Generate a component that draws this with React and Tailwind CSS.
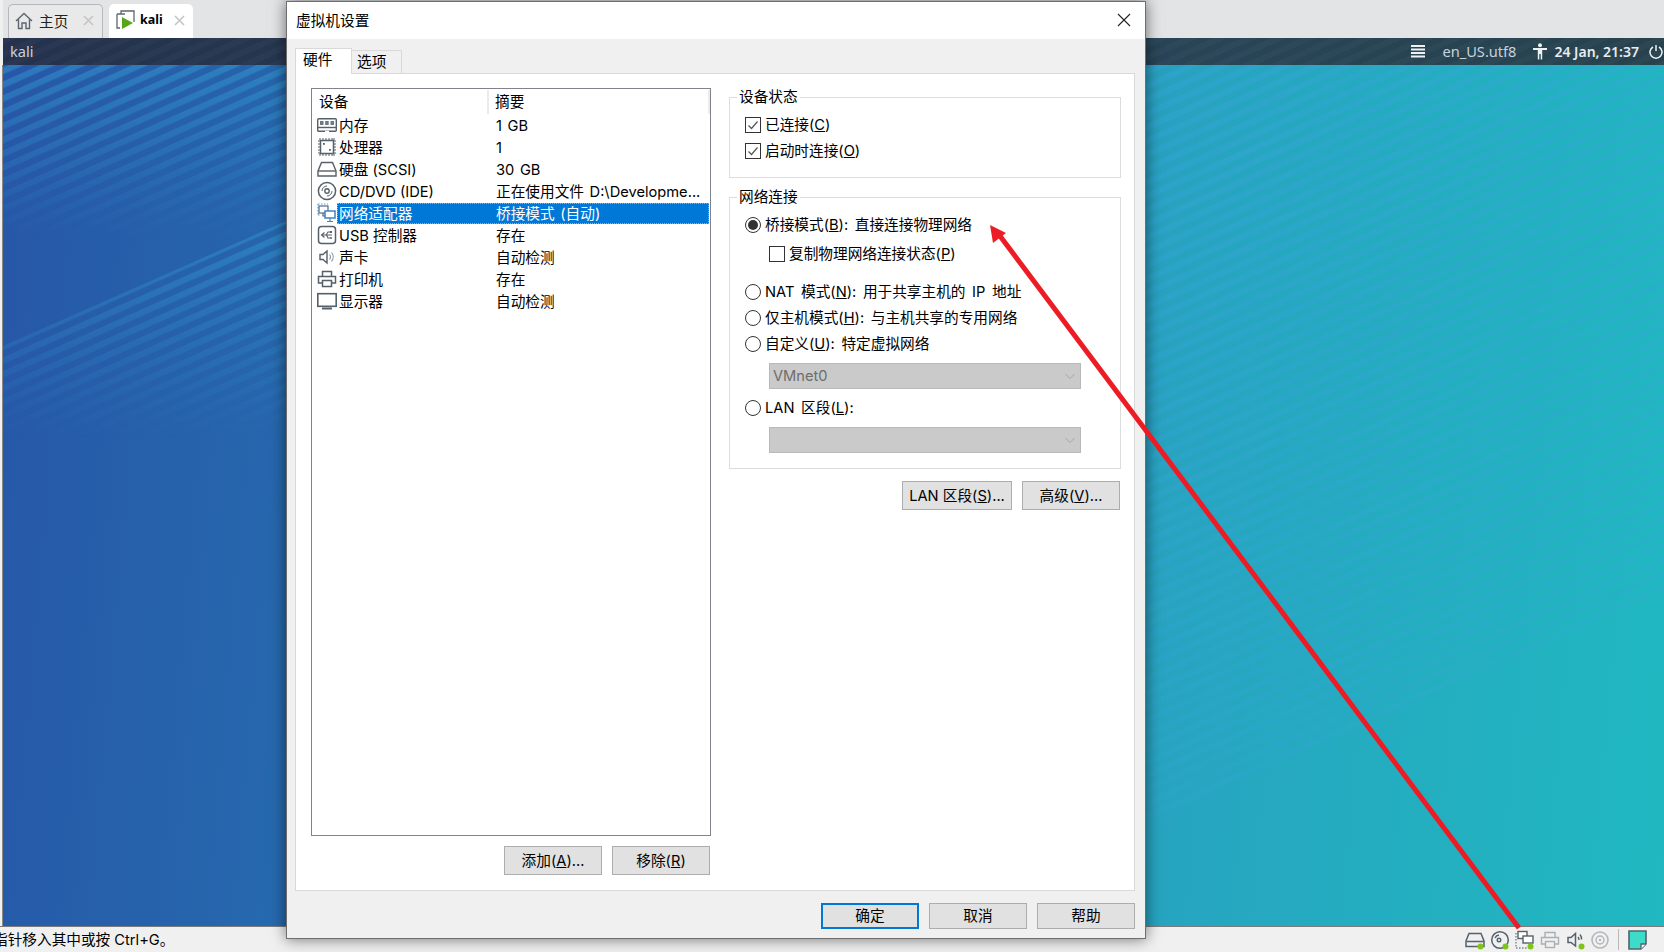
import React from "react";

const UI = "font-['Noto_Sans','Noto_Sans_CJK_SC',sans-serif]";
const DLG = "font-['Inter','Noto_Sans_CJK_SC',sans-serif]";

function Svg({ w = 20, h = 20, vb, children, className = "" }) {
  return (
    <svg width={w} height={h} viewBox={vb || `0 0 ${w} ${h}`} fill="none" stroke="#55606a" strokeWidth="1.4" className={"shrink-0 " + className}>
      {children}
    </svg>
  );
}

const MemIcon = () => (
  <Svg>
    <rect x="0.7" y="3.7" width="18.6" height="12.6" rx="1" strokeWidth="1.4" />
    <path d="M1 12.5H19" />
    <rect x="3" y="6" width="3.5" height="4" fill="#6f7a84" stroke="none" />
    <rect x="8.2" y="6" width="3.5" height="4" fill="#6f7a84" stroke="none" />
    <rect x="13.5" y="6" width="3.5" height="4" fill="#6f7a84" stroke="none" />
    <path d="M8 16.5h4" stroke="#fff" />
  </Svg>
);
const CpuIcon = () => (
  <Svg>
    <rect x="3.5" y="3.5" width="13" height="13" strokeWidth="1.5" />
    <path d="M3 1v2M6 1v2M9 1v2M12 1v2M15 1v2M17 1v2M3 17v2M6 17v2M9 17v2M12 17v2M15 17v2M17 17v2M1 4h2M1 7h2M1 10h2M1 13h2M1 16h2M17 4h2M17 7h2M17 10h2M17 13h2M17 16h2" strokeWidth="1" />
    <rect x="6" y="6" width="1.8" height="1.8" fill="#55606a" stroke="none" />
    <rect x="12" y="12" width="1.8" height="1.8" fill="#55606a" stroke="none" />
  </Svg>
);
const HddIcon = () => (
  <Svg>
    <path d="M4.5 3.5H15.5L19 12V17H1V12Z" strokeWidth="1.4" />
    <path d="M1.2 12H18.8" strokeWidth="1.4" />
  </Svg>
);
const CdIcon = () => (
  <Svg>
    <circle cx="10" cy="10" r="8.6" strokeWidth="1.5" />
    <circle cx="10" cy="10" r="2.2" />
    <path d="M5 10a5 5 0 0 1 5-5M10 15a5 5 0 0 0 5-5" strokeWidth="1" />
  </Svg>
);
const NetIcon = () => (
  <Svg>
    <path d="M1 1h10M1 1v11M1 12h3" stroke="#5b9bd5" strokeWidth="1.2" strokeDasharray="1.5 1.5" />
    <rect x="2" y="3" width="9" height="7" fill="#fff" stroke="#4f6a80" strokeWidth="1.2" />
    <rect x="8" y="8" width="10" height="7" fill="#fff" stroke="#3f83c4" strokeWidth="1.5" />
    <path d="M13 15v3M10 18.5h6" stroke="#3f83c4" strokeWidth="1.2" />
    <path d="M6 10v3H8" stroke="#4f6a80" strokeWidth="1.2" />
  </Svg>
);
const UsbIcon = () => (
  <Svg>
    <rect x="1.5" y="1.5" width="17" height="17" rx="3" strokeWidth="1.5" />
    <path d="M4.5 10H15M7.5 7.5 4.5 10l3 2.5M9 10l2-3h2M9.5 10l1.5 3h2" strokeWidth="1.1" />
    <rect x="13" y="6" width="2" height="2" fill="#55606a" stroke="none" />
    <circle cx="14" cy="13" r="1" fill="#55606a" stroke="none" />
  </Svg>
);
const SoundIcon = () => (
  <Svg>
    <path d="M3 7.5H6L10 4V16L6 12.5H3Z" strokeWidth="1.4" />
    <path d="M12.5 7.5a4 4 0 0 1 0 5M14.5 5.5a7 7 0 0 1 0 9" strokeWidth="1.1" stroke="#8a949c" />
  </Svg>
);
const PrintIcon = () => (
  <Svg>
    <path d="M5.5 7V2.5H14.5V7" strokeWidth="1.5" />
    <path d="M5 14H1.5V7.5H18.5V14H15" strokeWidth="1.5" />
    <rect x="5.5" y="11.5" width="9" height="6" strokeWidth="1.5" />
  </Svg>
);
const MonitorIcon = () => (
  <Svg>
    <rect x="0.8" y="2.7" width="18.4" height="12.6" strokeWidth="1.6" />
    <path d="M5 17.5H15" strokeWidth="2" />
  </Svg>
);

const rows = [
  [MemIcon, "内存", "1 GB"],
  [CpuIcon, "处理器", "1"],
  [HddIcon, "硬盘 (SCSI)", "30 GB"],
  [CdIcon, "CD/DVD (IDE)", "正在使用文件 D:\\Developme..."],
  [NetIcon, "网络适配器", "桥接模式 (自动)", true],
  [UsbIcon, "USB 控制器", "存在"],
  [SoundIcon, "声卡", "自动检测"],
  [PrintIcon, "打印机", "存在"],
  [MonitorIcon, "显示器", "自动检测"],
];

function Row({ icon: Icon, a, b, sel }) {
  return (
    <div className="flex h-[22px] items-center pl-[5px] pr-[1px]">
      <Icon />
      <div className={"flex h-[21px] flex-1 items-center pl-[2px] pt-px " + (sel ? "bg-[#0078d7] text-white outline-1 -outline-offset-1 outline-dotted outline-[#e0a060]" : "")}>
        <span className="w-[157px] shrink-0 whitespace-nowrap">{a}</span>
        <span className="whitespace-nowrap [word-spacing:1.5px]">{b}</span>
      </div>
    </div>
  );
}

function Btn({ children, w = "w-[98px] h-[26px]", primary }) {
  return (
    <div className={"flex items-center justify-center bg-[#e1e1e1] text-black " + w + " " + (primary ? "border-2 border-[#0078d7]" : "border border-[#adadad]")}>
      {children}
    </div>
  );
}

function Check({ on }) {
  return (
    <div className="flex h-[16px] w-[16px] shrink-0 items-center justify-center border border-[#333] bg-white">
      {on && (
        <svg width="12" height="12" viewBox="0 0 12 12" fill="none" stroke="#555" strokeWidth="1.2">
          <path d="M1.5 6.5 4.5 9.5 10.5 2.5" />
        </svg>
      )}
    </div>
  );
}

function Radio({ on }) {
  return (
    <div className="flex h-[16px] w-[16px] shrink-0 items-center justify-center rounded-full border border-[#333] bg-white">
      {on && <div className="h-[10px] w-[10px] rounded-full bg-[#333]" />}
    </div>
  );
}

function Opt({ control, className = "", children }) {
  return (
    <div className={"flex h-[22px] items-center gap-[4px] whitespace-pre [word-spacing:2.5px] " + className}>
      {control}
      <span>{children}</span>
    </div>
  );
}

function Group({ title, className, children }) {
  return (
    <div className={"relative border border-[#dcdcdc] pl-[15px] " + className}>
      <div className="absolute -top-[12px] left-[7px] bg-white px-[2px] leading-[22px]">{title}</div>
      {children}
    </div>
  );
}

function Combo({ text, className = "" }) {
  return (
    <div className={"ml-[24px] flex h-[26px] w-[312px] items-center justify-between border border-[#b9b9b9] bg-[#cacaca] pl-[3px] pr-[4px] text-[#6d6d6d] " + className}>
      <span>{text}</span>
      <svg width="12" height="12" viewBox="0 0 12 12" fill="none" stroke="#a8a8a8" strokeWidth="1">
        <path d="M1.5 4 6 8.5 10.5 4" />
      </svg>
    </div>
  );
}

function Dialog() {
  return (
    <div className={"absolute left-[286px] top-[1px] z-10 flex h-[938px] w-[860px] flex-col border border-[#6e6e6e] bg-[#f0f0f0] text-[14.67px] text-black shadow-[0_0_14px_rgba(0,0,0,0.55)] " + DLG}>
      <div className="flex h-[37px] shrink-0 items-center justify-between bg-white pl-[9px] pr-[14px]">
        <span>虚拟机设置</span>
        <svg className="-translate-y-px" width="14" height="14" viewBox="0 0 14 14" stroke="#222" strokeWidth="1.1">
          <path d="M1 1 13 13M13 1 1 13" />
        </svg>
      </div>
      <div className="flex flex-1 flex-col pl-[8px] pr-[10px]">
        <div className="flex h-[34px] shrink-0 items-end">
          <div className="relative top-px flex h-[26px] w-[57px] items-center border border-b-0 border-[#d9d9d9] bg-white pb-[3px] pl-[7px]">硬件</div>
          <div className="flex h-[23px] w-[50px] items-center border border-b-0 border-l-0 border-[#d9d9d9] bg-[#f0f0f0] pl-[5px]">选项</div>
        </div>
        <div className="flex h-[818px] shrink-0 border border-[#d9d9d9] bg-white">
          <div className="ml-[15px] mt-[14px] flex w-[400px] flex-col">
            <div className="h-[748px] border border-[#82828f] bg-white">
              <div className="flex h-[25px] items-center pt-px">
                <div className="flex h-full w-[177px] items-center border-r-2 border-[#ececec] pl-[7px]">设备</div>
                <div className="flex h-full flex-1 items-center border-r-2 border-[#ececec] pl-[6px]">摘要</div>
              </div>
              {rows.map(([I, a, b, s]) => (
                <Row key={a} icon={I} a={a} b={b} sel={s} />
              ))}
            </div>
            <div className="mt-[10px] flex justify-end gap-[10px] pr-px">
              <Btn w="w-[98px] h-[29px]">
                添加(<u>A</u>)...
              </Btn>
              <Btn w="w-[98px] h-[29px]">
                移除(<u>R</u>)
              </Btn>
            </div>
          </div>
          <div className="ml-[18px] flex w-[392px] flex-col pt-[23px]">
            <Group title="设备状态" className="h-[81px]">
              <Opt control={<Check on />} className="mt-[16px]">
                已连接(<u>C</u>)
              </Opt>
              <Opt control={<Check on />} className="mt-[4px]">
                启动时连接(<u>O</u>)
              </Opt>
            </Group>
            <Group title="网络连接" className="mt-[19px] h-[272px]">
              <Opt control={<Radio on />} className="mt-[16px]">
                桥接模式(<u>B</u>): 直接连接物理网络
              </Opt>
              <Opt control={<Check />} className="ml-[24px] mt-[7px]">
                复制物理网络连接状态(<u>P</u>)
              </Opt>
              <Opt control={<Radio />} className="mt-[16px]">
                NAT 模式(<u>N</u>): 用于共享主机的 IP 地址
              </Opt>
              <Opt control={<Radio />} className="mt-[4px]">
                仅主机模式(<u>H</u>): 与主机共享的专用网络
              </Opt>
              <Opt control={<Radio />} className="mt-[4px]">
                自定义(<u>U</u>): 特定虚拟网络
              </Opt>
              <Combo text="VMnet0" className="mt-[8px]" />
              <Opt control={<Radio />} className="mt-[8px]">
                LAN 区段(<u>L</u>):
              </Opt>
              <Combo text="" className="mt-[8px]" />
            </Group>
            <div className="mt-[12px] mr-px flex justify-end gap-[10px]">
              <Btn w="w-[110px] h-[29px]">
                LAN 区段(<u>S</u>)...
              </Btn>
              <Btn w="w-[98px] h-[29px]">
                高级(<u>V</u>)...
              </Btn>
            </div>
          </div>
        </div>
        <div className="flex justify-end gap-[10px] pt-[12px]">
          <Btn primary>确定</Btn>
          <Btn>取消</Btn>
          <Btn>帮助</Btn>
        </div>
      </div>
    </div>
  );
}

function Wallpaper() {
  return (
    <svg className="absolute inset-0 h-full w-full" viewBox="3 65 1661 861" preserveAspectRatio="none">
      <defs>
        <pattern id="st" patternUnits="userSpaceOnUse" width="60" height="12.6" patternTransform="rotate(-24)">
          <rect width="60" height="6.3" fill="#37a6d8" />
        </pattern>
        <linearGradient id="fa" x1="0" y1="65" x2="0" y2="240" gradientUnits="userSpaceOnUse">
          <stop offset="0" stopColor="#fff" stopOpacity="0.42" />
          <stop offset="1" stopColor="#fff" stopOpacity="0" />
        </linearGradient>
        <linearGradient id="fb" x1="0" y1="220" x2="0" y2="440" gradientUnits="userSpaceOnUse">
          <stop offset="0" stopColor="#fff" stopOpacity="0.4" />
          <stop offset="1" stopColor="#fff" stopOpacity="0" />
        </linearGradient>
        <linearGradient id="fc" x1="1150" y1="65" x2="1500" y2="860" gradientUnits="userSpaceOnUse">
          <stop offset="0" stopColor="#fff" stopOpacity="0.4" />
          <stop offset="0.85" stopColor="#fff" stopOpacity="0.18" />
          <stop offset="1" stopColor="#fff" stopOpacity="0" />
        </linearGradient>
        <mask id="ma" maskUnits="userSpaceOnUse" x="0" y="0" width="1664" height="952">
          <rect x="3" y="65" width="290" height="180" fill="url(#fa)" />
        </mask>
        <mask id="mb" maskUnits="userSpaceOnUse" x="0" y="0" width="1664" height="952">
          <polygon points="3,346 300,215 300,440 3,440" fill="url(#fb)" />
        </mask>
        <mask id="mc" maskUnits="userSpaceOnUse" x="0" y="0" width="1664" height="952">
          <polygon points="1146,65 1664,65 1664,590 1146,830" fill="url(#fc)" />
        </mask>
      </defs>
      <rect x="3" y="65" width="1661" height="861" fill="url(#st)" mask="url(#ma)" />
      <rect x="3" y="65" width="1661" height="861" fill="url(#st)" mask="url(#mb)" />
      <rect x="3" y="65" width="1661" height="861" fill="url(#st)" mask="url(#mc)" />
    </svg>
  );
}

function Dot() {
  return <circle cx="15.5" cy="16.5" r="3" fill="#7dc41c" stroke="none" />;
}

function StatusIcons() {
  return (
    <div className="flex items-center">
      <Svg w={20} h={20}>
        <path d="M4 3.5H16L19 11V16.5H1V11Z" stroke="#55616c" strokeWidth="1.5" />
        <path d="M1.5 11.5H18.5" stroke="#55616c" strokeWidth="1.5" />
        <Dot />
      </Svg>
      <Svg w={20} h={20} className="ml-[5px]">
        <circle cx="10" cy="10" r="8.3" stroke="#55616c" strokeWidth="1.5" />
        <circle cx="9" cy="10" r="1.8" stroke="#55616c" />
        <path d="M5 8a5 5 0 0 1 4-3" stroke="#55616c" />
        <Dot />
      </Svg>
      <Svg w={20} h={20} className="ml-[5px]">
        <path d="M1 3v15h12" stroke="#7b858e" strokeDasharray="1.5 1.5" />
        <rect x="3" y="1.5" width="9" height="7" fill="#fff" stroke="#55616c" strokeWidth="1.4" />
        <rect x="8" y="6" width="10" height="7" fill="#fff" stroke="#55616c" strokeWidth="1.4" />
        <Dot />
      </Svg>
      <Svg w={20} h={20} className="ml-[5px] opacity-45">
        <path d="M5 7V2.5H15V7M5 14H1.5V7.5H18.5V14H15" stroke="#55616c" strokeWidth="1.4" />
        <rect x="5.5" y="11.5" width="9" height="6" stroke="#55616c" strokeWidth="1.4" />
      </Svg>
      <Svg w={20} h={20} className="ml-[6px]">
        <path d="M2 7.5H5L9.5 3.5V16L5 12.5H2Z" stroke="#55616c" strokeWidth="1.5" />
        <path d="M12 7a4 4 0 0 1 1 3M14 4.5a7 7 0 0 1 1.5 5" stroke="#55616c" />
        <Dot />
      </Svg>
      <Svg w={20} h={20} className="ml-[4px] opacity-40">
        <circle cx="10" cy="10" r="8" stroke="#55616c" strokeWidth="1.5" />
        <circle cx="10" cy="10" r="4" stroke="#55616c" />
        <circle cx="10" cy="10" r="1.2" fill="#55616c" stroke="none" />
      </Svg>
      <div className="ml-[8px] h-[21px] w-px bg-[#b9b9b9]" />
      <Svg w={20} h={20} className="ml-[9px]">
        <path d="M1 1H18V14L13 19H1Z" fill="#3ddcc8" stroke="#55616c" strokeWidth="1.6" />
        <path d="M13 19V14H18" fill="#fff" stroke="#55616c" strokeWidth="1.3" />
      </Svg>
    </div>
  );
}

export default function App() {
  return (
    <div className={"relative flex h-[952px] w-[1664px] flex-col overflow-hidden bg-[#f0f0f0] " + UI}>
      {/* VMware tab strip */}
      <div className="flex h-[38px] shrink-0 items-end border-l-[3px] border-[#f0f0f0] bg-[#e3e4e6] pl-[5px]">
        <div className="flex h-[34px] w-[95px] items-center rounded-t-[5px] border border-b-0 border-[#b5b7ba] bg-[#e9e9ea] pb-[2px] pl-[6px] text-[14.67px] text-[#222]">
          <svg width="18" height="18" viewBox="0 0 18 18" fill="none" stroke="#5b6670" strokeWidth="1.4">
            <path d="M1 9 9 1.5 17 9M3.5 7.5V16.5H7V11H11V16.5H14.5V7.5" />
          </svg>
          <span className="ml-[6px]">主页</span>
          <svg className="ml-[15px]" width="11" height="11" viewBox="0 0 11 11" stroke="#c3c5c8" strokeWidth="1.6">
            <path d="M1 1 10 10M10 1 1 10" />
          </svg>
        </div>
        <div className="ml-[6px] flex h-[34px] w-[84px] items-center rounded-t-[5px] bg-white pb-[2px] pl-[7px] text-[12.5px] font-bold text-black">
          <svg width="19" height="20" viewBox="0 0 19 20" fill="none" stroke="#5b6670" strokeWidth="1.3">
            <path d="M5 4V1H18V12M1 4H9M1 4V18H4" />
            <path d="M6 7V19L17 13Z" fill="#58a618" stroke="none" />
          </svg>
          <span className="ml-[5px]">kali</span>
          <svg className="ml-[11px]" width="11" height="11" viewBox="0 0 11 11" stroke="#c3c5c8" strokeWidth="1.6">
            <path d="M1 1 10 10M10 1 1 10" />
          </svg>
        </div>
      </div>

      {/* Guest panel */}
      <div className="flex h-[27px] shrink-0 items-center border-l-[3px] border-[#f0f0f0] bg-[repeating-linear-gradient(156deg,rgba(255,255,255,0.025)_0_6px,transparent_6px_12px),linear-gradient(90deg,#25324d,#284556_75%,#27424e)] pl-[7px] text-[14.6px] text-[#c8d2dc]">
        <span>kali</span>
        <div className="ml-auto flex items-center pr-[1px]">
          <svg width="14" height="14" viewBox="0 0 14 14" stroke="#eef2f4" strokeWidth="2">
            <path d="M0 2H14M0 5.5H14M0 9H14M0 12.5H14" />
          </svg>
          <span className="ml-[17px]">en_US.utf8</span>
          <svg className="ml-[17px]" width="14" height="17" viewBox="0 0 14 17" fill="#eef2f4">
            <circle cx="7" cy="2.2" r="2" />
            <path d="M0 5H14V7H9.2V16.5H7.7V11H6.3V16.5H4.8V7H0Z" />
          </svg>
          <span className="ml-[7px] text-[14px] font-semibold text-[#e8edf0]">24 Jan, 21:37</span>
          <svg className="ml-[10px]" width="14" height="15" viewBox="0 0 14 15" fill="none" stroke="#eef2f4" strokeWidth="1.5">
            <path d="M7 1V7M4 3A6 6 0 1 0 10 3" />
          </svg>
        </div>
      </div>

      {/* Desktop */}
      <div className="flex min-h-0 flex-1">
        <div className="w-[3px] shrink-0 border-r border-[#8a8a8a] bg-[#f0f0f0]" />
        <div className="relative flex-1 bg-[linear-gradient(95deg,#2757a8_0%,#2666ad_17%,#27a4c0_70%,#20b8c1_100%)]">
          <Wallpaper />
        </div>
      </div>

      {/* Status bar */}
      <div className="flex h-[26px] shrink-0 items-center border-t border-[#7c7c7c] bg-[#f0f0f0] pr-[16px] text-[14.67px] text-black">
        <span className={"-ml-[7px] whitespace-nowrap " + DLG}>指针移入其中或按 Ctrl+G。</span>
        <div className="ml-auto">
          <StatusIcons />
        </div>
      </div>

      <Dialog />

      {/* Red annotation arrow */}
      <svg className="pointer-events-none absolute inset-0 z-20" width="1664" height="952" viewBox="0 0 1664 952">
        <path d="M1519 928 997 232" stroke="#ed1c24" strokeWidth="5" fill="none" />
        <polygon points="990,225 1006,233 993,243" fill="#ed1c24" />
      </svg>
    </div>
  );
}
